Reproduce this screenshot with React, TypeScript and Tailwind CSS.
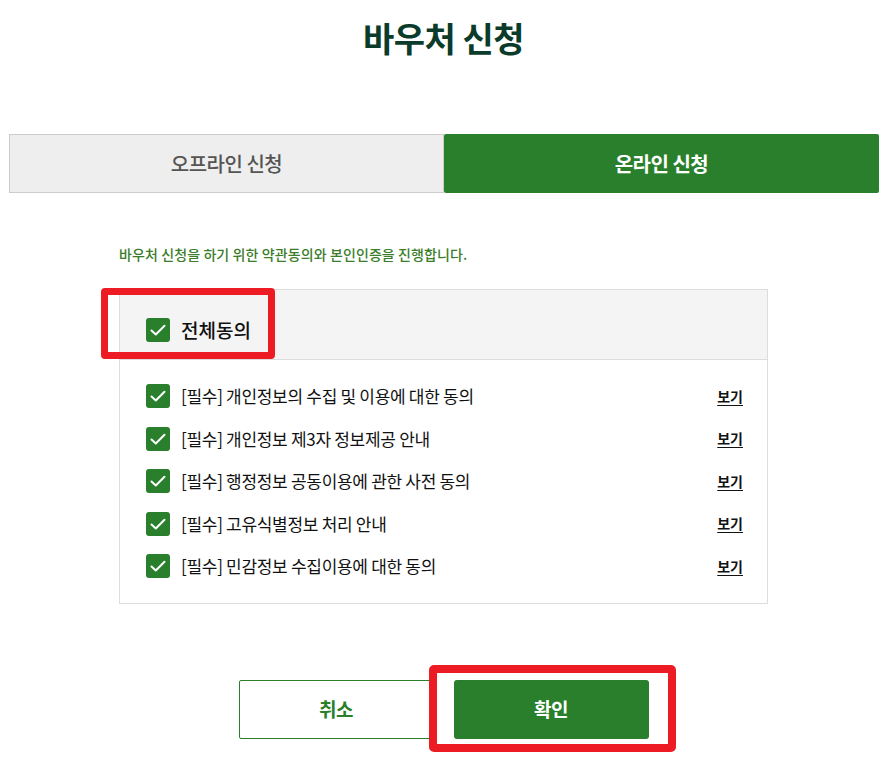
import React from "react";

const font = { fontFamily: '"Noto Sans CJK KR", "Noto Sans", sans-serif' };

function Check() {
  return (
    <span className="flex h-[24px] w-[24px] shrink-0 items-center justify-center rounded-[3px] bg-[#297f2c]">
      <svg width="18" height="18" viewBox="0 0 18 18" fill="none">
        <polyline points="2.5,9.5 6.8,13.5 15.5,4.8" stroke="#ffffff" strokeWidth="2" strokeLinecap="round" strokeLinejoin="round" />
      </svg>
    </span>
  );
}

const items = [
  "[필수] 개인정보의 수집 및 이용에 대한 동의",
  "[필수] 개인정보 제3자 정보제공 안내",
  "[필수] 행정정보 공동이용에 관한 사전 동의",
  "[필수] 고유식별정보 처리 안내",
  "[필수] 민감정보 수집이용에 대한 동의",
];

export default function App() {
  return (
    <div className="flex min-h-[764px] w-[887px] flex-col bg-white" style={font}>
      <h1 className="pt-[14px] text-center text-[34px] font-bold leading-[48px] tracking-[-0.5px] text-[#0a3b2b]">
        바우처 신청
      </h1>

      <div className="ml-[9px] mt-[72px] grid h-[59px] w-[870px] grid-cols-2">
        <div className="flex items-center justify-center border border-[#cccccc] bg-[#eeeeee] text-[20px] font-medium tracking-[-0.5px] text-[#555555]">
          오프라인 신청
        </div>
        <div className="flex items-center justify-center rounded-[2px] bg-[#297f2c] text-[20px] font-bold tracking-[-0.5px] text-white">
          온라인 신청
        </div>
      </div>

      <div className="mx-auto w-[649px]">
        <p className="mt-[51px] text-[14px] font-medium leading-[20px] tracking-[0.1px] text-[#3b7d2a]">
          바우처 신청을 하기 위한 약관동의와 본인인증을 진행합니다.
        </p>

        <div className="relative mt-[25px] border border-[#dddddd]">
          <div className="flex items-center gap-[11px] border-b border-[#dddddd] bg-[#f4f4f4] pb-[17px] pl-[26px] pt-[28px]">
            <Check />
            <span className="text-[19px] font-medium leading-[24px] text-[#111111]">전체동의</span>
          </div>
          <div className="pb-[15px] pl-[26px] pr-[24px] pt-[15px]">
            {items.map((t) => (
              <div key={t} className="flex h-[42.5px] items-center">
                <Check />
                <span className="ml-[11px] flex-1 text-[17px] leading-[24px] tracking-[-0.3px] text-[#111111]">{t}</span>
                <a className="text-[14px] font-bold text-[#111111] underline underline-offset-[3px]">보기</a>
              </div>
            ))}
          </div>
          <div className="pointer-events-none absolute left-[-19px] top-[-2px] h-[71px] w-[174px] rounded-[4px] border-[7px] border-[#ed1c24]" />
        </div>
      </div>

      <div className="mx-auto mt-[76px] flex gap-[20px]">
        <button className="flex h-[59px] w-[195px] items-center justify-center rounded-[2px] border border-[#297f2c] bg-white text-[19px] font-bold tracking-[-0.5px] text-[#297f2c]">
          취소
        </button>
        <div className="relative">
          <button className="flex h-[59px] w-[195px] items-center justify-center rounded-[3px] bg-[#297f2c] text-[19px] font-bold tracking-[-0.5px] text-white">
            확인
          </button>
          <div className="pointer-events-none absolute bottom-[-13px] left-[-25px] right-[-27px] top-[-15px] rounded-[5px] border-[8px] border-[#ed1c24]" />
        </div>
      </div>
    </div>
  );
}
